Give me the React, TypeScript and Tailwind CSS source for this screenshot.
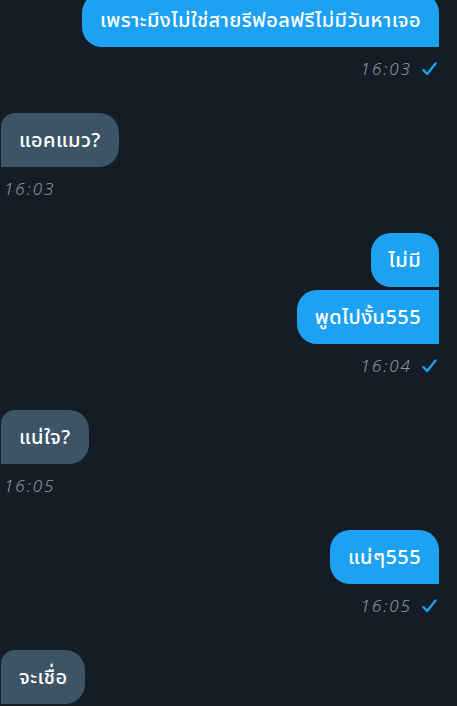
import React from 'react'

type Msg = {
  text: string
  corners: string
}

type Group = {
  side: 'in' | 'out'
  time: string
  messages: Msg[]
}

const groups: Group[] = [
  {
    side: 'out',
    time: '16:03',
    messages: [
      {
        text: 'เพราะมึงไม่ใช่สายรีฟอลฟรีไม่มีวันหาเจอ',
        corners: 'rounded-l-[20px] rounded-tr-[20px]',
      },
    ],
  },
  {
    side: 'in',
    time: '16:03',
    messages: [{ text: 'แอคแมว?', corners: 'rounded-r-[20px] rounded-tl-[14px]' }],
  },
  {
    side: 'out',
    time: '16:04',
    messages: [
      { text: 'ไม่มี', corners: 'rounded-l-[20px] rounded-tr-[20px]' },
      { text: 'พูดไปงั้น555', corners: 'rounded-l-[20px]' },
    ],
  },
  {
    side: 'in',
    time: '16:05',
    messages: [{ text: 'แน่ใจ?', corners: 'rounded-r-[20px] rounded-tl-[14px]' }],
  },
  {
    side: 'out',
    time: '16:05',
    messages: [{ text: 'แน่ๆ555', corners: 'rounded-l-[20px] rounded-tr-[20px]' }],
  },
  {
    side: 'in',
    time: '',
    messages: [{ text: 'จะเชื่อ', corners: 'rounded-r-[20px] rounded-tl-[14px]' }],
  },
]

const Check = () => (
  <svg width="15" height="14" viewBox="0 0 15 14" fill="none">
    <path
      d="M1.5 8.2 L5.2 12 L13.5 1.5"
      stroke="#1da1f2"
      strokeWidth="2.4"
      strokeLinecap="round"
      strokeLinejoin="round"
    />
  </svg>
)

export default function App() {
  return (
    <div className="h-[706px] w-[457px] overflow-hidden bg-[#141d26] font-['Noto_Sans','Noto_Sans_Thai',sans-serif]">
      <div className="-mt-[7px] flex flex-col gap-[32px]">
        {groups.map((g, gi) => {
          const out = g.side === 'out'
          return (
            <div key={gi} className={out ? 'flex flex-col items-end' : 'flex flex-col items-start'}>
              <div className={out ? 'flex flex-col items-end gap-[3px] pr-[18px]' : 'flex flex-col items-start gap-[3px] pl-px'}>
                {g.messages.map((m, mi) => (
                  <div
                    key={mi}
                    className={`flex h-[54px] items-center px-[18px] text-[20px] font-medium tracking-[0.4px] text-white ${m.corners} ${out ? 'bg-[#1da1f2]' : 'bg-[#3d5466]'}`}
                  >
                    {m.text}
                  </div>
                ))}
              </div>
              {g.time && (
                <div
                  className={
                    out
                      ? 'mt-[10px] flex h-[24px] items-center gap-[10px] pr-[20px]'
                      : 'mt-[10px] flex h-[24px] items-center pl-[4px]'
                  }
                >
                  <span className="text-[17px] font-light italic tracking-[2px] text-[#8b98a5]">{g.time}</span>
                  {out && <Check />}
                </div>
              )}
            </div>
          )
        })}
      </div>
    </div>
  )
}
